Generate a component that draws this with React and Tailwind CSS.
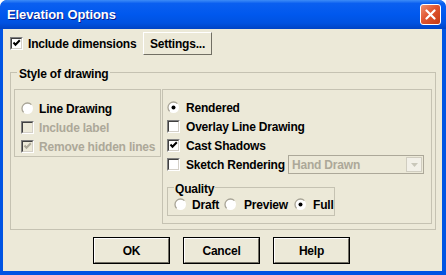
import React from "react";

const font = { fontFamily: '"Liberation Sans", Arial, sans-serif' };

function Check({ checked, disabled }) {
  return (
    <div
      className={`w-[13px] h-[13px] shrink-0 border-t border-l border-t-[#808080] border-l-[#808080] border-b border-r border-b-white border-r-white ${disabled ? "bg-[#ece9d8]" : "bg-white"}`}
    >
      <div className="w-full h-full border-t border-l border-t-[#404040] border-l-[#404040] border-b border-r border-b-[#d4d0c8] border-r-[#d4d0c8] flex items-center justify-center">
        {checked && (
          <svg width="9" height="9" viewBox="0 0 9 9">
            <path d="M1.5 3.5 L3.5 5.8 L7.8 1.2" fill="none" stroke={disabled ? "#aca899" : "#000"} strokeWidth="2" />
          </svg>
        )}
      </div>
    </div>
  );
}

function Radio({ checked }) {
  return (
    <svg width="13" height="13" viewBox="0 0 13 13" className="shrink-0">
      <circle cx="6.5" cy="6.5" r="5.5" fill="#fff" />
      <path d="M2.6 10.4 A5.5 5.5 0 0 1 10.4 2.6" fill="none" stroke="#a8a496" strokeWidth="1.3" />
      {checked && <circle cx="6.5" cy="6.5" r="2" fill="#000" />}
    </svg>
  );
}

function Button({ children, w = "w-[77px]", isDefault }) {
  return (
    <div className={`${w} h-[27px] ${isDefault ? "border border-black" : ""}`}>
      <div className="w-full h-full border-t border-l border-t-white border-l-white border-b border-r border-b-[#716f64] border-r-[#716f64] bg-[#ece9d8] flex items-center justify-center text-black font-bold">
        {children}
      </div>
    </div>
  );
}

export default function App() {
  return (
    <div className="w-[446px] h-[275px] overflow-hidden bg-[#0054e3] rounded-t-[7px] flex flex-col select-none" style={font}>
      {/* Title bar */}
      <div className="h-[29px] shrink-0 flex items-center pl-[7px] pr-[5px] bg-[linear-gradient(to_bottom,#3d8cf7_0%,#0a5ff0_12%,#0058ee_50%,#0052e0_80%,#0043c4_100%)] rounded-t-[7px]">
        <span className="text-white font-bold text-[13px] tracking-[-0.1px] flex-1 [text-shadow:1px_1px_0_#0a1e8c]">Elevation Options</span>
        <div className="w-[21px] h-[21px] rounded-[3px] border border-white bg-[linear-gradient(135deg,#f09070_0%,#e05530_45%,#c63a12_100%)] flex items-center justify-center">
          <svg width="11" height="11" viewBox="0 0 11 11">
            <path d="M1.5 1.5 L9.5 9.5 M9.5 1.5 L1.5 9.5" stroke="#fff" strokeWidth="2.2" strokeLinecap="round" />
          </svg>
        </div>
      </div>
      {/* Client area */}
      <div className="flex-1 ml-[3px] mr-[4px] mb-[4px] bg-[#ece9d8] flex flex-col text-[12px] tracking-[-0.2px] font-bold text-black">
        {/* Row 1 */}
        <div className="flex items-center mt-[3px] h-[23px] pl-[7px]">
          <Check checked />
          <span className="ml-[5px] w-[115px]">Include dimensions</span>
          <div className="w-[69px] h-[23px] border-t border-l border-t-white border-l-white border-b border-r border-b-[#716f64] border-r-[#716f64] flex items-center justify-center">
            Settings...
          </div>
        </div>
        {/* Group box */}
        <div className="relative mt-[17px] ml-[7px] w-[426px] h-[158px] border border-[#c5c2b2] flex items-start pt-[16px] pl-[3px] gap-[1px]">
          <span className="absolute -top-[8px] left-[6px] px-[2px] bg-[#ece9d8]">Style of drawing</span>
          {/* Left box */}
          <div className="w-[147px] h-[68px] border border-[#c5c2b2] flex flex-col pl-[6px] pt-[12px] gap-[6px]">
            <div className="flex items-center h-[13px]">
              <Radio />
              <span className="ml-[5px]">Line Drawing</span>
            </div>
            <div className="flex items-center h-[13px]">
              <Check disabled />
              <span className="ml-[5px] text-[#aca899]">Include label</span>
            </div>
            <div className="flex items-center h-[13px]">
              <Check disabled checked />
              <span className="ml-[5px] text-[#aca899]">Remove hidden lines</span>
            </div>
          </div>
          {/* Right box */}
          <div className="w-[270px] h-[135px] border border-[#c5c2b2] flex flex-col pl-[4px] pt-[11px]">
            <div className="flex items-center h-[13px]">
              <Radio checked />
              <span className="ml-[6px]">Rendered</span>
            </div>
            <div className="flex items-center h-[13px] mt-[6px]">
              <Check />
              <span className="ml-[6px]">Overlay Line Drawing</span>
            </div>
            <div className="flex items-center h-[13px] mt-[6px]">
              <Check checked />
              <span className="ml-[6px]">Cast Shadows</span>
            </div>
            <div className="flex items-center h-[19px] mt-[3px]">
              <Check />
              <span className="ml-[6px] w-[102px] whitespace-nowrap">Sketch Rendering</span>
              <div className="w-[136px] h-[19px] border border-[#aca899] bg-[#ece9d8] flex items-center">
                <span className="flex-1 pl-[3px] text-[#aca899]">Hand Drawn</span>
                <div className="w-[16px] h-[15px] mr-[1px] border border-[#d0cdc0] bg-[#f2f0e8] flex items-center justify-center">
                  <svg width="7" height="4" viewBox="0 0 7 4">
                    <path d="M0 0 H7 L3.5 4 Z" fill="#c9c7ba" />
                  </svg>
                </div>
              </div>
            </div>
            {/* Quality group */}
            <div className="relative mt-[13px] w-[168px] h-[29px] border border-[#c5c2b2] flex items-center pl-[6px] pt-[6px]">
              <span className="absolute -top-[8px] left-[6px] px-[1px] bg-[#ece9d8]">Quality</span>
              <Radio />
              <span className="ml-[5px] w-[32px]">Draft</span>
              <Radio />
              <span className="ml-[7px] w-[50px]">Preview</span>
              <Radio checked />
              <span className="ml-[6px]">Full</span>
            </div>
          </div>
        </div>
        {/* Buttons */}
        <div className="flex mt-[7px] pl-[90px] gap-[13px]">
          <Button isDefault>OK</Button>
          <Button isDefault>Cancel</Button>
          <Button isDefault>Help</Button>
        </div>
      </div>
    </div>
  );
}
